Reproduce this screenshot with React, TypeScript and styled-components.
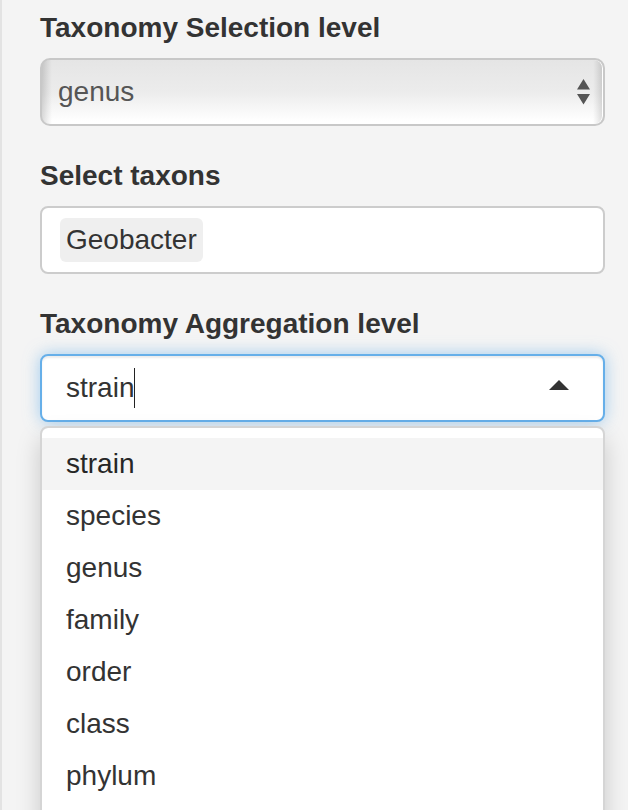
import React, { useState } from "react";
import styled, { createGlobalStyle } from "styled-components";

const GlobalStyle = createGlobalStyle`
  *, *::before, *::after { box-sizing: border-box; }
  body {
    margin: 0;
    background: #f4f4f4;
    color: #333;
    font: 28px/40px "Liberation Sans", Arial, sans-serif;
  }
`;

const Sidebar = styled.form`
  height: 100vh;
  overflow: hidden;
  padding: 8px 23px 0 38px;
  border-left: 2px solid #e3e3e3;
  display: flex;
  flex-direction: column;
  gap: 30px;
`;

const Field = styled.div`
  display: flex;
  flex-direction: column;
  gap: 10px;
`;

const Label = styled.label`
  font-weight: bold;
`;

const ControlWrap = styled.div`
  position: relative;
`;

const NativeSelect = styled.select`
  display: block;
  width: 100%;
  height: 68px;
  padding: 0 16px;
  appearance: none;
  border: 2px solid #c8c8c8;
  border-radius: 10px;
  color: #555;
  font: inherit;
  outline: none;
  background:
    linear-gradient(90deg, rgba(0, 0, 0, 0.14), rgba(0, 0, 0, 0.05) 6px, transparent 10px,
      transparent calc(100% - 10px), rgba(0, 0, 0, 0.05) calc(100% - 6px), rgba(0, 0, 0, 0.14)),
    linear-gradient(#e5e5e5, #ececec 50%, #fff 96%);
  box-shadow: inset -1px 0 0 #fff;
`;

const SelectArrows = styled.svg`
  position: absolute;
  right: 15px;
  top: 21px;
  width: 13px;
  height: 26px;
  pointer-events: none;
`;

const Box = styled.div<{ $focused?: boolean }>`
  display: flex;
  align-items: center;
  height: 68px;
  padding: 0 34px 0 ${(p) => (p.$focused ? 24 : 18)}px;
  background: #fff;
  border: 2px solid ${(p) => (p.$focused ? "#66afe9" : "#ccc")};
  border-radius: 8px;
  box-shadow: ${(p) =>
    p.$focused
      ? "inset 0 2px 2px rgba(0,0,0,.075), 0 0 16px rgba(102,175,233,.6)"
      : "none"};
`;

const Tag = styled.span`
  padding: 2px 6px;
  border-radius: 6px;
  background: #efefef;
`;

const TextInput = styled.input<{ $fit?: boolean }>`
  min-width: 0;
  flex: ${(p) => (p.$fit ? "none" : "1")};
  field-sizing: ${(p) => (p.$fit ? "content" : "fixed")};
  height: 40px;
  padding: 0;
  border: 0;
  outline: 0;
  background: transparent;
  color: inherit;
  font: inherit;
  caret-color: transparent;
`;

const Caret = styled.span`
  width: 1px;
  height: 40px;
  background: #222;
`;

const Arrow = styled.svg`
  width: 20px;
  height: 10px;
  margin: 0 0 6px auto;
`;

const Menu = styled.ul`
  position: absolute;
  top: calc(100% + 4px);
  left: 0;
  right: 0;
  min-height: 400px;
  margin: 0;
  padding: 10px 0;
  list-style: none;
  background: #fff;
  background-clip: padding-box;
  border: 2px solid #d5d5d5;
  border-radius: 8px;
  box-shadow: 0 12px 24px rgba(0, 0, 0, 0.175);
`;

const Option = styled.li<{ $active: boolean }>`
  padding: 6px 24px;
  color: ${(p) => (p.$active ? "#262626" : "#333")};
  background: ${(p) => (p.$active ? "#f4f4f4" : "transparent")};
`;

const levels = ["strain", "species", "genus", "family", "order", "class", "phylum"];

export default function App() {
  const [selection, setSelection] = useState("genus");
  const [taxon, setTaxon] = useState("");
  const [level, setLevel] = useState("strain");

  return (
    <>
      <GlobalStyle />
      <Sidebar>
        <Field>
          <Label htmlFor="selection">Taxonomy Selection level</Label>
          <ControlWrap>
            <NativeSelect id="selection" value={selection} onChange={(e) => setSelection(e.target.value)}>
              {levels.map((l) => (
                <option key={l}>{l}</option>
              ))}
            </NativeSelect>
            <SelectArrows viewBox="0 0 13 26" fill="#555" aria-hidden="true">
              <path d="M6.5 0 13 10.5H0ZM0 15H13L6.5 25.5Z" />
            </SelectArrows>
          </ControlWrap>
        </Field>

        <Field>
          <Label htmlFor="taxons">Select taxons</Label>
          <Box>
            <Tag>Geobacter</Tag>
            <TextInput id="taxons" value={taxon} onChange={(e) => setTaxon(e.target.value)} />
          </Box>
        </Field>

        <Field>
          <Label htmlFor="aggregation">Taxonomy Aggregation level</Label>
          <ControlWrap>
            <Box $focused>
              <TextInput
                $fit
                id="aggregation"
                role="combobox"
                aria-expanded="true"
                aria-controls="levels"
                value={level}
                onChange={(e) => setLevel(e.target.value)}
              />
              <Caret />
              <Arrow viewBox="0 0 20 10" fill="#333" aria-hidden="true">
                <path d="M10 0 20 10H0Z" />
              </Arrow>
            </Box>
            <Menu id="levels" role="listbox">
              {levels.map((l) => (
                <Option key={l} role="option" aria-selected={l === level} $active={l === level} onClick={() => setLevel(l)}>
                  {l}
                </Option>
              ))}
            </Menu>
          </ControlWrap>
        </Field>
      </Sidebar>
    </>
  );
}
